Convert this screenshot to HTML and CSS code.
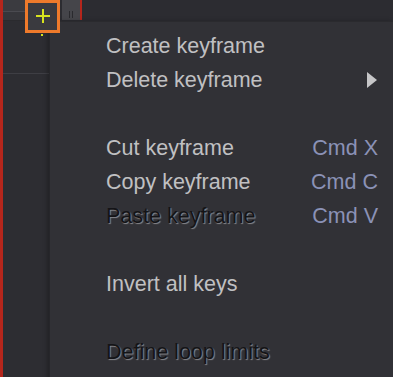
FILE: index.html
```html
<!DOCTYPE html>
<html lang="en">
<head>
  <meta charset="UTF-8" />
  <meta name="viewport" content="width=device-width, initial-scale=1.0" />
  <title>Keyframe menu</title>
  <link rel="stylesheet" href="styles.css">
</head>
<body>
  <div class="app">
    <div class="toolbar">
      <div class="tool-left"></div>
      <button class="add-btn" type="button" aria-label="Add keyframe">
        <svg width="16" height="16" viewBox="0 0 16 16">
          <path d="M8 1v14M1 8h14" stroke="#d6e21f" stroke-width="2" fill="none"/>
        </svg>
      </button>
      <div class="pause"><span></span><span></span></div>
      <div class="playhead"></div>
    </div>
    <div class="marker-dot"></div>
    <div class="track"></div>

    <ul class="menu">
      <li class="item">Create keyframe</li>
      <li class="item">Delete keyframe <span class="arrow"></span></li>
      <li class="sep"></li>
      <li class="item">Cut keyframe <span class="key">Cmd X</span></li>
      <li class="item">Copy keyframe <span class="key">Cmd C</span></li>
      <li class="item disabled">Paste keyframe <span class="key">Cmd V</span></li>
      <li class="sep"></li>
      <li class="item">Invert all keys</li>
      <li class="sep"></li>
      <li class="item disabled">Define loop limits</li>
    </ul>
  </div>
</body>
</html>
```

FILE: styles.css
```css
:root {
  --bg: #2d2d32;
  --menu-bg: #313136;
  --text: #c0c0c2;
  --key: #8b92b6;
  --red: #b5261c;
  --orange: #ee7a2b;
}
html, body {
  margin: 0;
  padding: 0;
  background: var(--bg);
}
.app {
  position: relative;
  width: 390px;
  height: 377px;
  border-left: 3px solid var(--red);
  background: var(--bg);
  overflow: hidden;
  font-family: "Liberation Sans", Arial, sans-serif;
}
.toolbar {
  display: flex;
  align-items: flex-start;
  height: 21px;
  background: #2c2c31;
}
.tool-left {
  width: 22px;
  height: 21px;
  background: linear-gradient(#3b3b40 0 11px, #4a4a50 11px 12px, #36363b 12px 20px, #2a2a2e 20px);
}
.add-btn {
  position: relative;
  z-index: 3;
  width: 35px;
  height: 33px;
  margin: 0;
  padding: 0;
  border: 3px solid var(--orange);
  background: #3a3a3f;
  display: flex;
  align-items: center;
  justify-content: center;
}
.add-btn svg { display: block; margin-top: -1px; }
.pause {
  width: 18px;
  height: 20px;
  margin-left: 2px;
  background: #45454a;
  display: flex;
  gap: 2px;
  justify-content: center;
  padding-top: 11px;
  box-sizing: border-box;
}
.pause span {
  width: 1px;
  height: 7px;
  background: #2a2a2e;
}
.playhead {
  width: 2px;
  height: 20px;
  background: var(--red);
}
.marker-dot {
  position: absolute;
  left: 38px;
  top: 34px;
  width: 2px;
  height: 2px;
  background: #d6e21f;
}
.track {
  width: 46px;
  height: 52px;
  border-bottom: 1px solid #3e3e44;
}
.menu {
  position: absolute;
  z-index: 2;
  left: 46px;
  top: 21px;
  right: 0;
  bottom: -10px;
  margin: 0;
  padding: 7px 15px 0 56px;
  list-style: none;
  background: var(--menu-bg);
  border-left: 1px solid #26262a;
  border-top: 1px solid #2a2a2e;
  box-shadow: -2px 0 4px rgba(0, 0, 0, 0.25);
}
.item {
  display: flex;
  align-items: center;
  justify-content: space-between;
  height: 34px;
  font-size: 21.5px;
  color: var(--text);
  white-space: nowrap;
}
.sep { height: 34px; }
.key { color: var(--key); }
.arrow {
  width: 0;
  height: 0;
  margin-right: 1px;
  border-top: 8px solid transparent;
  border-bottom: 8px solid transparent;
  border-left: 10px solid #c6c6c8;
}
.item.disabled {
  color: #141417;
  text-shadow: 1px 1px 1px #8a8a8e;
}
.item.disabled .key {
  color: var(--key);
  text-shadow: none;
}
```
